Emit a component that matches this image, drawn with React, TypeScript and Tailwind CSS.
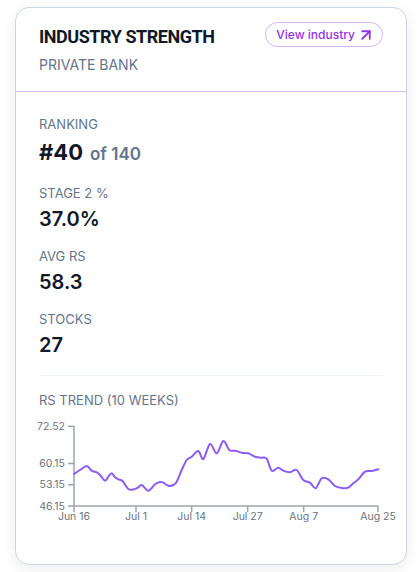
import { ArrowUpRight } from 'lucide-react';

const stats = [
  { label: 'Stage 2 %', value: '37.0%' },
  { label: 'Avg RS', value: '58.3' },
  { label: 'Stocks', value: '27' },
];

// trend points, already in chart coordinates
const points: [number, number][] = [
  [74, 474], [80, 470], [86.7, 466], [91.7, 470.7], [96.7, 472.3], [100, 475], [105, 480.7],
  [108.3, 476.7], [111.7, 473.3], [115, 477.3], [118.3, 479.3], [122.7, 481], [128.3, 489],
  [134, 489.3], [138.3, 487.3], [141.7, 485], [148.3, 490.7], [155, 484.3], [160, 482],
  [163.3, 482.7], [168.3, 485.7], [173.3, 485], [176.7, 481.7], [181.7, 470], [186.7, 460],
  [191.7, 456.7], [198.3, 451], [203.3, 459], [210, 444], [216.7, 453.3], [223.3, 441],
  [229.3, 450], [235, 450.7], [241.7, 452.7], [248.3, 453.3], [255, 456.7], [261.7, 457.7],
  [266.7, 458.7], [271.7, 470.7], [278.3, 467.7], [283.3, 470.7], [290, 472.3], [296.7, 470],
  [303.3, 480], [310, 482.7], [315.7, 488.3], [321.7, 478.3], [328.3, 479.3], [335, 486],
  [341.7, 488], [348.3, 487.7], [353.3, 483.3], [358.3, 479.3], [365, 471.7], [371.7, 471],
  [378.3, 469.3],
];

const yTicks = [
  { label: '72.52', y: 426.3 },
  { label: '60.15', y: 463.5 },
  { label: '53.15', y: 484.8 },
  { label: '46.15', y: 506 },
];

const xTicks = [
  { label: 'Jun 16', x: 74 },
  { label: 'Jul 1', x: 136 },
  { label: 'Jul 14', x: 191.7 },
  { label: 'Jul 27', x: 247.7 },
  { label: 'Aug 7', x: 303.7 },
  { label: 'Aug 25', x: 378 },
];

function smoothPath(pts: [number, number][]) {
  let d = `M${pts[0][0]},${pts[0][1]}`;
  for (let i = 0; i < pts.length - 1; i++) {
    const p0 = pts[i - 1] || pts[i];
    const p1 = pts[i];
    const p2 = pts[i + 1];
    const p3 = pts[i + 2] || p2;
    const c1x = p1[0] + (p2[0] - p0[0]) / 6;
    const c1y = p1[1] + (p2[1] - p0[1]) / 6;
    const c2x = p2[0] - (p3[0] - p1[0]) / 6;
    const c2y = p2[1] - (p3[1] - p1[1]) / 6;
    d += ` C${c1x.toFixed(1)},${c1y.toFixed(1)} ${c2x.toFixed(1)},${c2y.toFixed(1)} ${p2[0]},${p2[1]}`;
  }
  return d;
}

function TrendChart() {
  return (
    <svg
      width={344}
      height={128}
      viewBox="39 412 344 128"
      className="mt-1 block overflow-visible"
    >
      {/* axes */}
      <line x1={74} y1={426} x2={74} y2={506} stroke="#9ca3af" strokeWidth={1.5} />
      <line x1={74} y1={506} x2={378} y2={506} stroke="#9ca3af" strokeWidth={1.5} />

      {yTicks.map((t) => (
        <g key={t.label}>
          <line x1={68} y1={t.y} x2={74} y2={t.y} stroke="#9ca3af" strokeWidth={1.5} />
          <text
            x={65}
            y={t.y + 3.6}
            textAnchor="end"
            fontSize={10.5}
            fill="#6b7280"
            fontFamily="Inter, sans-serif"
          >
            {t.label}
          </text>
        </g>
      ))}

      {xTicks.map((t) => (
        <g key={t.label}>
          <line x1={t.x} y1={506} x2={t.x} y2={512} stroke="#9ca3af" strokeWidth={1.5} />
          <text
            x={t.x}
            y={520}
            textAnchor="middle"
            fontSize={10.5}
            fill="#6b7280"
            fontFamily="Inter, sans-serif"
          >
            {t.label}
          </text>
        </g>
      ))}

      <path
        d={smoothPath(points)}
        fill="none"
        stroke="#8b5cf6"
        strokeWidth={2}
        strokeLinecap="round"
        strokeLinejoin="round"
      />
    </svg>
  );
}

export default function App() {
  return (
    <div className="min-h-screen bg-white font-['Inter',sans-serif] pt-[7px] pl-[15px]">
      <div className="w-[392px] rounded-[14px] border border-[#cbd5e1] bg-white shadow-[0_4px_14px_rgba(15,23,42,0.08)] overflow-hidden">
        {/* Header */}
        <div className="flex items-start justify-between px-[23px] pt-[15px] pb-4 border-b border-[#d8b4fe]">
          <div>
            <h2 className="font-['Roboto',sans-serif] text-[18px] leading-7 font-bold text-[#111827] tracking-[-0.025em]">
              INDUSTRY STRENGTH
            </h2>
            <div className="mt-1 text-[14px] leading-5 uppercase text-[#64748b]">
              Private Bank
            </div>
          </div>
          <button className="-mt-px flex items-center gap-[2px] h-[25px] rounded-full border border-[#d8b4fe] pl-[10px] pr-[7px] text-[12px] font-medium text-[#9333ea]">
            View industry
            <ArrowUpRight size={18} strokeWidth={2.4} />
          </button>
        </div>

        {/* Stats */}
        <div className="px-[23px] pt-6 pb-6">
          <div className="text-[13px] leading-4 uppercase text-[#64748b]">Ranking</div>
          <div className="mt-[6px] flex items-baseline gap-[7px] leading-7">
            <span className="text-[22px] font-bold text-[#111827]">#40</span>
            <span className="text-[17px] font-semibold text-[#64748b]">of 140</span>
          </div>

          {stats.map((s, i) => (
            <div key={s.label} className={i === 0 ? 'mt-[17px]' : 'mt-[15px]'}>
              <div className="text-[13px] leading-4 uppercase text-[#64748b]">{s.label}</div>
              <div className="mt-1 text-[20px] leading-7 font-semibold text-[#111827]">{s.value}</div>
            </div>
          ))}

          <div className="mt-4 border-t border-[#f1f5f9]" />

          <div className="mt-4 text-[13px] leading-4 uppercase text-[#64748b]">
            RS Trend (10 weeks)
          </div>
          <TrendChart />
        </div>
      </div>
    </div>
  );
}
